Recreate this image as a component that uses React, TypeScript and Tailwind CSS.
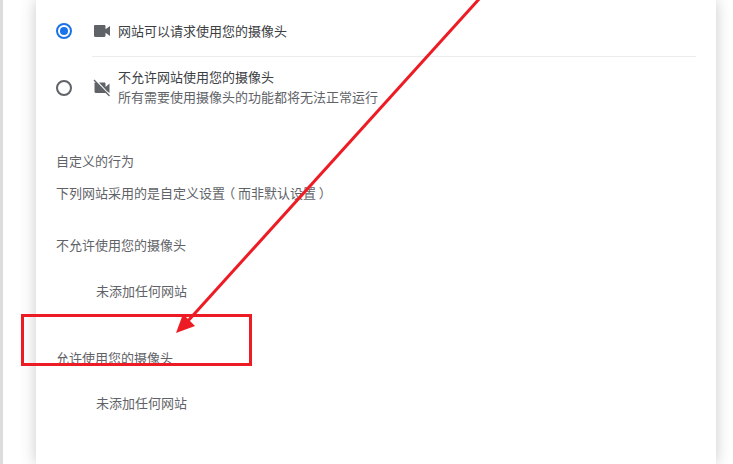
import React from 'react';

const font = { fontFamily: '"Noto Sans CJK SC", "Noto Sans", sans-serif' };

const App = () => {
  return (
    <div
      className="relative h-[464px] w-[733px] overflow-hidden bg-white text-[13px] text-[#5f6368]"
      style={font}
    >
      {/* scrollbar edge on the left */}
      <div className="flex h-full">
        <div className="w-[3px] shrink-0 bg-[#dcdcdc]" />

        {/* Card */}
        <div className="ml-[33px] h-full w-[680px] shrink-0 bg-white shadow-[0_0_14px_rgba(60,64,67,0.28)]">
          {/* Radio options */}
          <div className="ml-5 mr-5 pt-[6px]">
            <div className="flex h-[50px] items-center">
              <div className="flex h-4 w-4 items-center justify-center rounded-full border-2 border-[#1a73e8]">
                <div className="h-2 w-2 rounded-full bg-[#1a73e8]" />
              </div>
              <svg viewBox="0 0 16 12" className="ml-[22px] h-3 w-4 text-[#5f6368]" fill="currentColor">
                <path d="M0 1.200C0 .5.5 0 1.200 0h9.100c.7 0 1.200.5 1.200 1.200v3.100L16 .9v10.200l-4.500-3.400v3.100c0 .7-.5 1.200-1.200 1.200H1.200C.5 12 0 11.500 0 10.800z" />
              </svg>
              <span className="ml-2 text-[#3c4043]">网站可以请求使用您的摄像头</span>
            </div>
            <div className="ml-9 h-px bg-[#ececec]" />
            <div className="flex h-[62px] items-center">
              <div className="h-4 w-4 rounded-full border-2 border-[#5f6368]" />
              <svg viewBox="0 0 18 18" className="ml-[21px] h-[18px] w-[18px] text-[#5f6368]" fill="currentColor">
                <path d="M1.500 3.500h1.700L13.500 14H2.700c-.7 0-1.200-.5-1.200-1.200zM6 3.500h5.300c.7 0 1.200.5 1.200 1.200v3.200l4-3.400v9.500l-2.600-2.100z" />
                <path d="M1 1l15.500 16" stroke="currentColor" strokeWidth="1.300" fill="none" />
              </svg>
              <div className="ml-[7px] pb-[2px] leading-[20px]">
                <div className="text-[#3c4043]">不允许网站使用您的摄像头</div>
                <div>所有需要使用摄像头的功能都将无法正常运行</div>
              </div>
            </div>
          </div>

          {/* Custom behaviour */}
          <div className="ml-5 mt-[32px] leading-[20px]">
            <div>自定义的行为</div>
            <div className="mt-3">
              下列网站采用的是自定义设置
              <span className="inline-block w-[13px] text-center [font-feature-settings:'palt']">（</span>
              而非默认设置
              <span className="inline-block w-[13px] text-center [font-feature-settings:'palt']">）</span>
            </div>
            <div className="mt-[32px]">不允许使用您的摄像头</div>
            <div className="ml-10 mt-[26px]">未添加任何网站</div>
            <div className="mt-[47px]">允许使用您的摄像头</div>
            <div className="ml-10 mt-[25px]">未添加任何网站</div>
          </div>
        </div>
      </div>

      {/* Red annotation: box */}
      <div className="absolute left-[21px] top-[314px] h-[52px] w-[231px] border-[3px] border-[#ed1c24]" />

      {/* Red annotation: arrow */}
      <svg viewBox="0 0 733 464" className="absolute inset-0 h-[464px] w-[733px]">
        <path d="M480 -2L187 322" stroke="#ed1c24" strokeWidth="3" fill="none" />
        <path d="M176 333L183 314L195 326Z" fill="#ed1c24" />
      </svg>
    </div>
  );
};

export default App;
